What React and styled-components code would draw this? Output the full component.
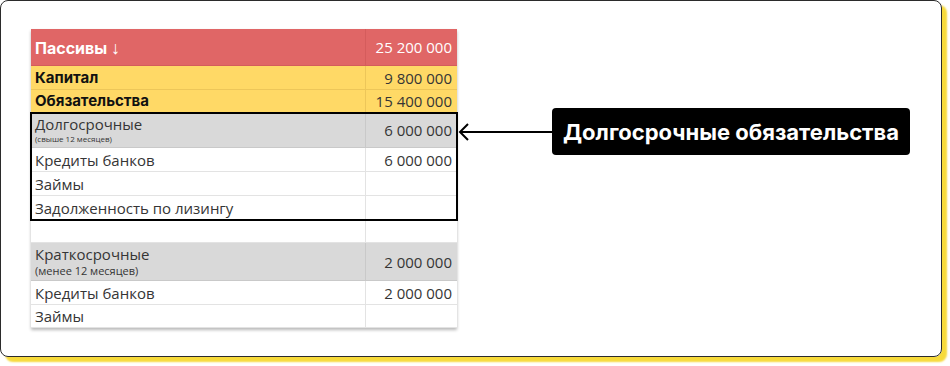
import React from "react";
import styled, { createGlobalStyle } from "styled-components";

const GlobalStyle = createGlobalStyle`
  body {
    margin: 0;
    background: #fff;
    font-family: "Open Sans", "Liberation Sans", sans-serif;
  }
`;

const Page = styled.div`
  min-height: 366px;
  box-sizing: border-box;
  padding-bottom: 9px;
`;

const Card = styled.div`
  width: 942px;
  height: 357px;
  box-sizing: border-box;
  border: 1px solid #2b2b2b;
  border-radius: 8px;
  box-shadow: 5px 5px 2px #f7da3a;
  padding: 28px 0 0 30px;
  display: flex;
  align-items: flex-start;
`;

const Sheet = styled.div`
  width: 426px;
  box-shadow: 0 2px 3px rgba(0, 0, 0, 0.28);
  color: #353535;
  font-size: 15px;
`;

const tones = {
  head: { bg: "#e06666", line: "#d45c5c" },
  yellow: { bg: "#ffd966", line: "#edc659" },
  gray: { bg: "#d9d9d9", line: "#c9c9c9" },
  white: { bg: "#ffffff", line: "#e3e3e3" },
};

const Row = styled.div`
  display: grid;
  grid-template-columns: 335px 1fr;
  height: ${(p) => p.$h}px;
  box-sizing: border-box;
  background: ${(p) => tones[p.$tone].bg};
  border-bottom: 1px solid ${(p) => tones[p.$tone].line};
  color: ${(p) => (p.$tone === "head" ? "#fff" : "#353535")};
`;

const Name = styled.div`
  display: flex;
  flex-direction: column;
  justify-content: center;
  gap: 1px;
  padding-left: 4px;
  border-right: 1px solid ${(p) => tones[p.$tone].line};
  line-height: 16px;
  white-space: nowrap;
  font-family: ${(p) => (p.$bold ? 'Inter, "Liberation Sans", sans-serif' : "inherit")};
  font-weight: ${(p) => (p.$bold ? 700 : 400)};
  font-size: ${(p) => (p.$head ? "16px" : "15px")};
  color: ${(p) => (p.$bold && !p.$head ? "#111" : "inherit")};
`;

const Arrow = styled.span`
  font-family: "Open Sans", sans-serif;
  font-weight: 400;
  font-size: 18px;
`;

const Note = styled.span`
  font-size: ${(p) => p.$size}px;
  line-height: ${(p) => p.$size + 4}px;
`;

const Value = styled.div`
  display: flex;
  align-items: center;
  justify-content: flex-end;
  padding-right: 5px;
  white-space: nowrap;
`;

const Group = styled.div`
  outline: 2px solid #000;
  outline-offset: -1px;
  position: relative;
`;

const Annotation = styled.div`
  margin-top: 79px;
  display: flex;
  align-items: center;
`;

const Label = styled.div`
  background: #000;
  color: #fff;
  font-family: Inter, Roboto, "Liberation Sans", sans-serif;
  font-weight: 700;
  font-size: 22px;
  height: 47px;
  padding: 0 11px;
  display: flex;
  align-items: center;
  border-radius: 4px;
  white-space: nowrap;
`;

const Line = ({ name, value, tone = "white", h = 24, bold, note, noteSize }) => (
  <Row $tone={tone} $h={h}>
    <Name $tone={tone} $head={tone === "head"} $bold={bold}>
      <span>{name}</span>
      {note && <Note $size={noteSize}>{note}</Note>}
    </Name>
    <Value>{value}</Value>
  </Row>
);

export default function App() {
  return (
    <Page>
      <GlobalStyle />
      <Card>
        <Sheet>
          <Line
            tone="head"
            h={37}
            bold
            name={<>Пассивы <Arrow>↓</Arrow></>}
            value="25 200 000"
          />
          <Line tone="yellow" bold name="Капитал" value="9 800 000" />
          <Line tone="yellow" h={23} bold name="Обязательства" value="15 400 000" />
          <Group>
            <Line tone="gray" h={35} name="Долгосрочные" note="(свыше 12 месяцев)" noteSize={8} value="6 000 000" />
            <Line name="Кредиты банков" value="6 000 000" />
            <Line name="Займы" />
            <Line name="Задолженность по лизингу" />
          </Group>
          <Line h={23} name="" />
          <Line tone="gray" h={38} name="Краткосрочные" note="(менее 12 месяцев)" noteSize={11} value="2 000 000" />
          <Line name="Кредиты банков" value="2 000 000" />
          <Line h={23} name="Займы" />
        </Sheet>
        <Annotation>
          <svg width="95" height="20" viewBox="0 0 95 20">
            <path d="M3 10 H95 M11 2 L3 10 L11 18" fill="none" stroke="#000" strokeWidth="2" />
          </svg>
          <Label>Долгосрочные обязательства</Label>
        </Annotation>
      </Card>
    </Page>
  );
}
